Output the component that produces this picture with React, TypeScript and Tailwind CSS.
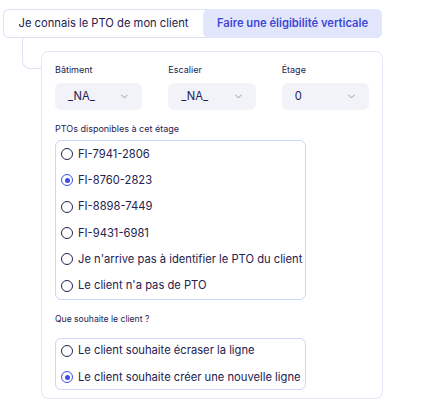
import { useState } from 'react';
import { ChevronDown } from 'lucide-react';

const ptos = [
  'FI-7941-2806',
  'FI-8760-2823',
  'FI-8898-7449',
  'FI-9431-6981',
  "Je n'arrive pas à identifier le PTO du client",
  "Le client n'a pas de PTO",
];

const wishes = ['Le client souhaite écraser la ligne', 'Le client souhaite créer une nouvelle ligne'];

function Radio({ checked }: { checked: boolean }) {
  return (
    <span
      className={
        checked
          ? 'flex h-[12px] w-[12px] shrink-0 items-center justify-center rounded-full border-[1.5px] border-[#3d4fe6]'
          : 'flex h-[12px] w-[12px] shrink-0 items-center justify-center rounded-full border-[1.3px] border-[#24224f]'
      }
    >
      {checked && <span className="h-[5px] w-[5px] rounded-full bg-[#3d4fe6]" />}
    </span>
  );
}

function Select({ label, value }: { label: string; value: string }) {
  return (
    <div className="flex w-[88px] flex-col">
      <span className="text-[9px] leading-[12px] text-[#24224f]">{label}</span>
      <div className="mt-[7px] flex h-[27px] items-center justify-between rounded-[6px] bg-[#f2f3f8] pl-[13px] pr-[12px]">
        <span className="text-[11.2px] text-[#24224f]">{value}</span>
        <ChevronDown className="h-[11px] w-[11px] text-[#6b6f8a]" strokeWidth={1.5} />
      </div>
    </div>
  );
}

function RadioGroup({
  options,
  value,
  onChange,
  rowClass,
  listClass,
}: {
  options: string[];
  value: number;
  onChange: (i: number) => void;
  rowClass: string;
  listClass: string;
}) {
  return (
    <div className={'flex w-[251px] flex-col rounded-[6px] border border-[#cfd6fb] ' + listClass}>
      {options.map((o, i) => (
        <button
          key={o}
          onClick={() => onChange(i)}
          className={'flex items-center gap-[5px] pl-[5px] text-left ' + rowClass}
        >
          <Radio checked={i === value} />
          <span className="whitespace-nowrap text-[11.2px] text-[#24224f]">{o}</span>
        </button>
      ))}
    </div>
  );
}

export default function App() {
  const [tab, setTab] = useState(1);
  const [pto, setPto] = useState(1);
  const [wish, setWish] = useState(1);

  return (
    <div className="h-[408px] w-[424px] overflow-hidden bg-white pl-[3px] pt-[9px]" style={{ fontFamily: 'Inter, "Noto Sans", sans-serif' }}>
      {/* Mode switch */}
      <div className="flex h-[29px] w-[379px] items-stretch rounded-[6px] border border-[#dde1f3]">
        <button
          onClick={() => setTab(0)}
          className={
            tab === 0
              ? 'w-[199px] rounded-[6px] bg-[#e2e6fc] text-[11.2px] font-semibold text-[#3e48d6]'
              : 'w-[199px] text-[11.2px] text-[#24224f]'
          }
        >
          Je connais le PTO de mon client
        </button>
        <button
          onClick={() => setTab(1)}
          className={
            tab === 1
              ? '-my-px -mr-px flex-1 rounded-[6px] bg-[#e2e6fc] text-[11.2px] font-semibold text-[#3e48d6]'
              : 'flex-1 text-[11.2px] text-[#24224f]'
          }
        >
          Faire une éligibilité verticale
        </button>
      </div>

      <div className="flex">
        {/* Connector */}
        <div className="ml-[19px] h-[31px] w-[19px] shrink-0 rounded-bl-[8px] border-b border-l border-[#dde1f3]" />

        {/* Panel */}
        <div className="mt-[13px] h-[348px] w-[342px] rounded-[8px] border border-[#e4e6f4] px-[13px] pt-[12px]">
          <div className="flex gap-[26px]">
            <Select label="Bâtiment" value="_NA_" />
            <Select label="Escalier" value="_NA_" />
            <Select label="Étage" value="0" />
          </div>

          <p className="mt-[13px] text-[9px] leading-[12px] text-[#24224f]">PTOs disponibles à cet étage</p>
          <div className="mt-[5px]">
            <RadioGroup options={ptos} value={pto} onChange={setPto} rowClass="h-[26.3px]" listClass="" />
          </div>

          <p className="mt-[13px] text-[8.6px] leading-[12px] text-[#24224f]">Que souhaite le client ?</p>
          <div className="mt-[13px]">
            <RadioGroup options={wishes} value={wish} onChange={setWish} rowClass="h-[23.5px]" listClass="gap-[3px]" />
          </div>
        </div>
      </div>
    </div>
  );
}
